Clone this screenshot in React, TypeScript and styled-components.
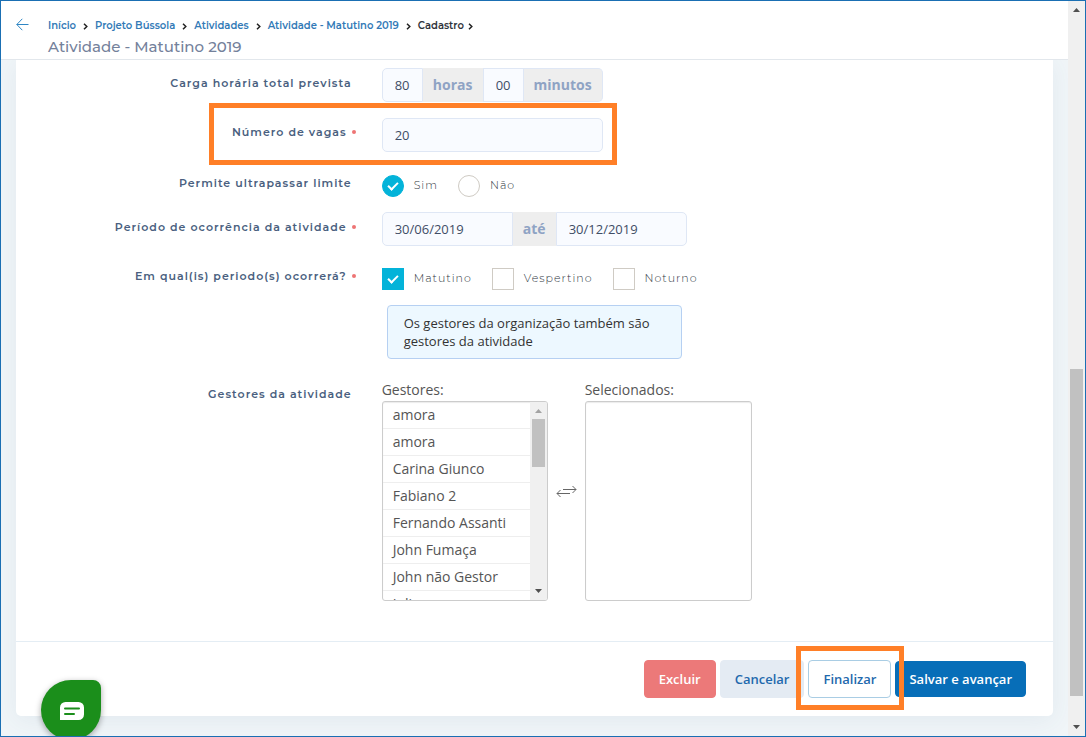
import React from "react";
import styled, { createGlobalStyle, css } from "styled-components";

const HEADING = '"Montserrat", "Inter", "Open Sans", sans-serif';
const BODY = '"Open Sans", "Noto Sans", sans-serif';
const BLUE = "#076eb8";

const GlobalStyle = createGlobalStyle`
  *, *::before, *::after { box-sizing: border-box; }
  body {
    margin: 0;
    background: #eef4f7;
    font-family: ${BODY};
    font-size: 13px;
    color: #3c4a63;
  }
  button, input { font: inherit; }
`;

const Frame = styled.div`
  position: relative;
  display: flex;
  min-height: 100vh;
  overflow: hidden;
  border: 1px solid #1a6fb3;
`;

const Page = styled.div`
  flex: 1;
  min-width: 0;
  background: #f0f5f8;
`;

const Header = styled.header`
  position: relative;
  display: flex;
  gap: 19px;
  height: 59px;
  padding: 17px 15px 0;
  background: #fff;
  border-bottom: 1px solid #e2e7ec;
  font-family: ${HEADING};
`;

const BackLink = styled.a`
  height: 13px;
  color: #2f86c4;
  svg { display: block; }
`;

const Crumbs = styled.nav`
  display: flex;
  align-items: center;
  gap: 7px;
  height: 16px;
  font-size: 10px;
  line-height: 16px;
  font-weight: 600;
  color: #30343b;
  a { color: #337ab7; text-decoration: none; }
`;

const Current = styled.span`
  display: flex;
  align-items: center;
  gap: 4px;
`;

const Title = styled.h1`
  margin: 3px 0 0;
  font-size: 15px;
  line-height: 20px;
  font-weight: 500;
  color: #74819b;
`;

const Card = styled.form`
  margin: 0 15px 20px;
  background: #fff;
  border-radius: 0 0 5px 5px;
  box-shadow: 0 4px 24px rgba(60, 100, 140, 0.08);
`;

const Fields = styled.div`
  padding: 8px 0 40px;
`;

const Row = styled.div<{ $gap?: number }>`
  display: grid;
  grid-template-columns: minmax(0, 1fr) minmax(0, 2fr);
  column-gap: 30px;
  margin-top: ${(p) => p.$gap ?? 0}px;
`;

const Label = styled.label<{ $top?: number; $required?: boolean }>`
  display: flex;
  align-items: center;
  justify-content: flex-end;
  height: 16px;
  margin-top: ${(p) => p.$top ?? 0}px;
  font-family: ${HEADING};
  font-size: 11px;
  line-height: 16px;
  font-weight: 600;
  letter-spacing: 1px;
  color: #4a5f80;
  ${(p) =>
    p.$required &&
    css`
      margin-right: -4px;
      &::after {
        content: "";
        width: 4px;
        height: 4px;
        margin-left: 5px;
        border-radius: 50%;
        background: #ee7474;
      }
    `}
`;

const Control = styled.div`
  position: relative;
  display: flex;
  align-items: flex-start;
`;

const Input = styled.input<{ $w: number }>`
  width: ${(p) => p.$w}px;
  height: 34px;
  padding: 0 12px;
  border: 1px solid #dfe7f5;
  border-radius: 0;
  background: #f9fbff;
  color: #3f4d66;
  outline: none;
  &:first-child { border-radius: 5px 0 0 5px; }
  &:last-child { border-radius: 0 5px 5px 0; }
  &:only-of-type { border-radius: 5px; }
`;

const Addon = styled.span<{ $w: number }>`
  width: ${(p) => p.$w}px;
  height: 34px;
  background: #eee;
  color: #8fa3c4;
  font-size: 14px;
  font-weight: 700;
  line-height: 34px;
  text-align: center;
  &:last-child {
    border: 1px solid #dfe7f5;
    border-left: 0;
    border-radius: 0 5px 5px 0;
    line-height: 32px;
  }
`;

const Highlight = styled.span<{ $inset: string }>`
  position: absolute;
  z-index: 2;
  inset: ${(p) => p.$inset};
  border: 5px solid #ff7f27;
  pointer-events: none;
`;

const NumberField = styled.div`
  position: relative;
  display: flex;
`;

const Choices = styled.div`
  display: flex;
  gap: 20px;
`;

const Choice = styled.label`
  display: flex;
  gap: 10px;
  height: 22px;
  font-family: ${HEADING};
  font-size: 11px;
  line-height: 20px;
  font-weight: 300;
  letter-spacing: 1px;
  color: #2f3742;
`;

const Tick = styled.input`
  appearance: none;
  width: 22px;
  height: 22px;
  margin: 0;
  border: 1px solid #cfcbc4;
  border-radius: ${(p) => (p.type === "radio" ? "50%" : "0")};
  background: #fff;
  &:checked {
    display: grid;
    place-items: center;
    border-color: #03b3d9;
    background: #03b3d9;
  }
  &:checked::before {
    content: "";
    width: 10px;
    height: 6px;
    border: solid #fff;
    border-width: 0 0 2px 2px;
    transform: translateY(-1px) rotate(-45deg);
  }
`;

const Notice = styled.p`
  width: 295px;
  margin: 0 0 0 5px;
  padding: 8px 16px;
  border: 1px solid #b6d0f2;
  border-radius: 4px;
  background: #edf8ff;
  color: #333;
  line-height: 18px;
`;

const Picker = styled.div`
  display: grid;
  grid-template-columns: 166px 37px 167px;
`;

const PickerTitle = styled.span`
  display: block;
  height: 19px;
  font-size: 14px;
  line-height: 16px;
  color: #555;
`;

const ListBox = styled.div`
  display: flex;
  height: 200px;
  overflow: hidden;
  border: 1px solid #ccc;
  border-radius: 3px;
  box-shadow: inset 0 1px 1px rgba(0, 0, 0, 0.08);
`;

const Options = styled.ul`
  flex: 1;
  min-width: 0;
  margin: 0;
  padding: 0;
  list-style: none;
`;

const Option = styled.li`
  height: 27px;
  padding-left: 10px;
  border-bottom: 1px solid #eee;
  font-size: 14px;
  line-height: 25px;
  color: #555;
`;

const Swap = styled.div`
  display: grid;
  place-items: center;
`;

const Track = styled.div`
  display: flex;
  flex-direction: column;
  align-items: center;
  flex: none;
  width: 17px;
  background: #f0f0f0;
  svg { flex: none; }
`;

const Spacer = styled.div<{ $grow: number }>`
  flex: ${(p) => p.$grow} 1 0;
`;

const Thumb = styled.div<{ $grow: number }>`
  flex: ${(p) => p.$grow} 1 0;
  width: 13px;
  background: #c1c1c1;
`;

const Footer = styled.footer`
  display: flex;
  justify-content: flex-end;
  align-items: center;
  gap: 4px;
  height: 75px;
  padding-right: 27px;
  border-top: 1px solid #e4edf4;
`;

type Tone = "danger" | "soft" | "outline" | "primary";

const tones = {
  danger: css`background: #ec7979; border-color: #ec7979; color: #fff;`,
  soft: css`background: #e4ebf3; border-color: #e4ebf3; color: #1f69ad;`,
  outline: css`background: #fff; border-color: #a9cde4; color: #1f69ad;`,
  primary: css`height: 36px; padding: 0 13px; background: ${BLUE}; border-color: ${BLUE}; color: #fff;`,
};

const Button = styled.button<{ $tone: Tone }>`
  height: 38px;
  padding: 0 14px;
  border: 1px solid;
  border-radius: 4px;
  font-size: 13px;
  font-weight: 600;
  line-height: 34px;
  white-space: nowrap;
  ${(p) => tones[p.$tone]}
`;

const Marked = styled.div`
  position: relative;
  display: flex;
`;

const ChatButton = styled.button`
  position: absolute;
  left: 40px;
  bottom: -4px;
  display: grid;
  place-items: center;
  width: 60px;
  height: 60px;
  padding: 2px 0 0 2px;
  border: 0;
  border-radius: 50% 8px 50% 50%;
  background: #1b8e1b;
  box-shadow: 0 2px 6px rgba(0, 0, 0, 0.35);
`;

const Chevron = () => (
  <svg width="5" height="7" viewBox="0 0 5 7" fill="none" stroke="#222" strokeWidth="1.5" aria-hidden="true">
    <path d="M1 .8 3.8 3.5 1 6.2" />
  </svg>
);

const Arrow = ({ up, muted }: { up?: boolean; muted?: boolean }) => (
  <svg width="17" height="17" viewBox="0 0 17 17" fill={muted ? "#a3a3a3" : "#505050"} aria-hidden="true">
    <path d={up ? "M5 11h7L8.500 7z" : "M5 6h7L8.500 10z"} />
  </svg>
);

const ScrollBar = ({ before, thumb, after, atTop }: { before: number; thumb: number; after: number; atTop?: boolean }) => (
  <Track aria-hidden="true">
    <Arrow up muted={atTop} />
    <Spacer $grow={before} />
    <Thumb $grow={thumb} />
    <Spacer $grow={after} />
    <Arrow />
  </Track>
);

const trail = ["Início", "Projeto Bússola", "Atividades", "Atividade - Matutino 2019"];
const managers = ["amora", "amora", "Carina Giunco", "Fabiano 2", "Fernando Assanti", "John Fumaça", "John não Gestor", "Julia"];
const periods = ["Matutino", "Vespertino", "Noturno"];

export default function App() {
  return (
    <>
      <GlobalStyle />
      <Frame>
        <Page>
          <Header>
            <BackLink href="#voltar" aria-label="Voltar">
              <svg width="13" height="13" viewBox="0 0 13 13" fill="none" stroke="currentColor">
                <path d="M12.500 6.500H.8M6.300.8.8 6.500l5.500 5.700" />
              </svg>
            </BackLink>
            <div>
              <Crumbs aria-label="Navegação">
                {trail.map((name) => (
                  <React.Fragment key={name}>
                    <a href="#nivel">{name}</a>
                    <Chevron />
                  </React.Fragment>
                ))}
                <Current>
                  Cadastro <Chevron />
                </Current>
              </Crumbs>
              <Title>Atividade - Matutino 2019</Title>
            </div>
          </Header>

          <Card>
            <Fields>
              <Row>
                <Label htmlFor="horas" $top={7}>Carga horária total prevista</Label>
                <Control>
                  <Input id="horas" $w={41} defaultValue="80" />
                  <Addon $w={60}>horas</Addon>
                  <Input aria-label="Minutos" $w={41} defaultValue="00" />
                  <Addon $w={79}>minutos</Addon>
                </Control>
              </Row>

              <Row $gap={16}>
                <Label htmlFor="vagas" $top={6} $required>Número de vagas</Label>
                <Control>
                  <NumberField>
                    <Input id="vagas" $w={221} defaultValue="20" />
                    <Highlight $inset="-15px -14px -13px -173px" />
                  </NumberField>
                </Control>
              </Row>

              <Row $gap={23}>
                <Label as="span">Permite ultrapassar limite</Label>
                <Choices role="radiogroup" aria-label="Permite ultrapassar limite">
                  <Choice><Tick type="radio" name="limite" defaultChecked />Sim</Choice>
                  <Choice><Tick type="radio" name="limite" />Não</Choice>
                </Choices>
              </Row>

              <Row $gap={15}>
                <Label htmlFor="inicio" $top={7} $required>Período de ocorrência da atividade</Label>
                <Control>
                  <Input id="inicio" $w={131} defaultValue="30/06/2019" />
                  <Addon $w={43}>até</Addon>
                  <Input aria-label="Data final" $w={131} defaultValue="30/12/2019" />
                </Control>
              </Row>

              <Row $gap={22}>
                <Label as="span" $required>Em qual(is) periodo(s) ocorrerá?</Label>
                <Choices>
                  {periods.map((name, i) => (
                    <Choice key={name}><Tick type="checkbox" defaultChecked={i === 0} />{name}</Choice>
                  ))}
                </Choices>
              </Row>

              <Row $gap={15}>
                <span />
                <Notice>Os gestores da organização também são gestores da atividade</Notice>
              </Row>

              <Row $gap={23}>
                <Label as="span" $top={4}>Gestores da atividade</Label>
                <Picker>
                  <div>
                    <PickerTitle id="gestores">Gestores:</PickerTitle>
                    <ListBox>
                      <Options aria-labelledby="gestores">
                        {managers.map((name, i) => (
                          <Option key={i}>{name}</Option>
                        ))}
                      </Options>
                      <ScrollBar before={0} thumb={48} after={116} atTop />
                    </ListBox>
                  </div>
                  <Swap>
                    <svg width="21" height="14" viewBox="0 0 21 14" fill="none" stroke="#666" aria-hidden="true">
                      <path d="M7 4.500h13M16.500 1l3.500 3.500L16.500 8M14 8.500H1M4.500 5 1 8.500 4.500 12" />
                    </svg>
                  </Swap>
                  <div>
                    <PickerTitle id="selecionados">Selecionados:</PickerTitle>
                    <ListBox>
                      <Options aria-labelledby="selecionados" />
                    </ListBox>
                  </div>
                </Picker>
              </Row>
            </Fields>

            <Footer>
              <Button type="button" $tone="danger">Excluir</Button>
              <Button type="button" $tone="soft">Cancelar</Button>
              <Marked>
                <Button type="button" $tone="outline">Finalizar</Button>
                <Highlight $inset="-14px -13px -12px -12px" />
              </Marked>
              <Button type="button" $tone="primary">Salvar e avançar</Button>
            </Footer>
          </Card>
        </Page>
        <ScrollBar before={351} thumb={327} after={23} />
        <ChatButton type="button" aria-label="Abrir chat">
          <svg width="24" height="18" viewBox="0 0 24 18" aria-hidden="true">
            <path d="M5.500 0h13A5.500 5.500 0 0 1 24 5.500v7a5.500 5.500 0 0 1-5.500 5.500H0V5.500A5.500 5.500 0 0 1 5.500 0z" fill="#fff" />
            <path d="M5 6.500h14M5 12h9" stroke="#1b8e1b" strokeWidth="2" strokeLinecap="round" />
          </svg>
        </ChatButton>
      </Frame>
    </>
  );
}
